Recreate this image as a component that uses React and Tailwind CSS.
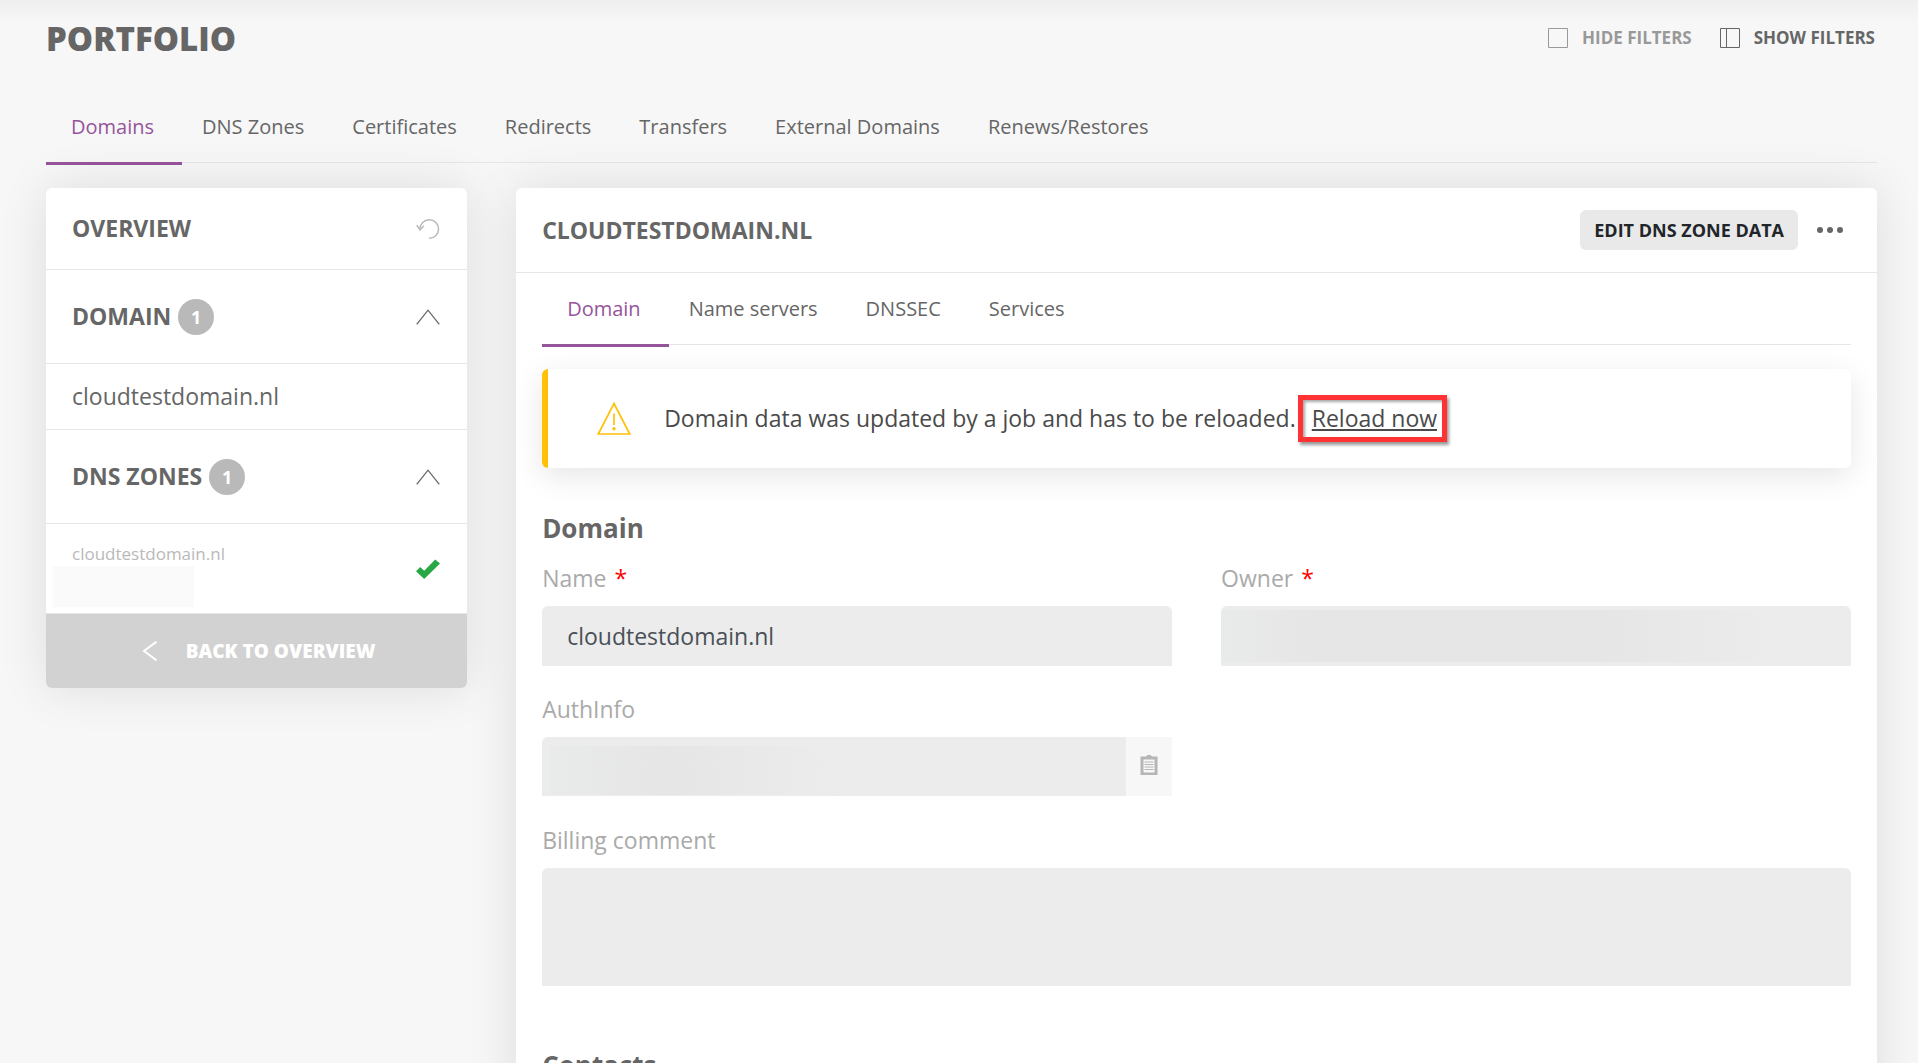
import React, { useState } from 'react';

const portfolioTabs = ['Domains', 'DNS Zones', 'Certificates', 'Redirects', 'Transfers', 'External Domains', 'Renews/Restores'];
const domainTabs = ['Domain', 'Name servers', 'DNSSEC', 'Services'];

const Tabs = ({ items, active, onChange }) => (
  <nav className="flex border-b border-[#e6e6e6]">
    {items.map((item) => (
      <button
        key={item}
        type="button"
        onClick={() => onChange(item)}
        className={`-mb-[3px] h-[74px] border-b-[3px] pr-7 pl-5 text-xl whitespace-nowrap first:pl-[25px] ${item === active ? 'border-[#96549c] text-[#96549c]' : 'border-transparent text-[#666]'}`}
      >
        {item}
      </button>
    ))}
  </nav>
);

const Chevron = () => (
  <svg width="24" height="16" viewBox="0 0 24 16" fill="none" stroke="#666" strokeWidth="1.3">
    <path d="M0.7 15.3 12 1.2 23.3 15.3" />
  </svg>
);

const SidebarGroup = ({ title, count }) => {
  return (
    <button type="button" className="flex h-[94px] w-full items-center justify-between border-b border-[#e6e6e6] pr-[27px] pl-[26px] text-left">
      <span className="flex items-center gap-[7px] text-[23px] font-bold">
        {title}
        <span className="flex size-9 items-center justify-center rounded-full bg-[#b9b9b9] text-lg text-white">{count}</span>
      </span>
      <Chevron />
    </button>
  );
};

const Label = ({ htmlFor, required, children }) => (
  <label htmlFor={htmlFor} className="flex h-11 gap-2 text-[23px] leading-8 text-[#aaa]">
    {children}
    {required && <span className="text-[#f00]">*</span>}
  </label>
);

const Sidebar = () => (
  <aside className="w-[23%] shrink-0 overflow-hidden rounded-md bg-white shadow-[0_0_50px_rgba(0,0,0,0.11)]">
    <div className="flex h-[82px] items-center justify-between border-b border-[#e6e6e6] pr-[27px] pl-[26px]">
      <h2 className="text-[23px] font-bold">OVERVIEW</h2>
      <button type="button" aria-label="Refresh">
        <svg width="24" height="22" viewBox="0 0 24 22" fill="none" stroke="#bbb" strokeWidth="1.5">
          <path d="M4 11.5A9.3 9.3 0 1 1 13 20.3" />
          <path d="M0.7 7.3 4 11.8 8 7.8" />
        </svg>
      </button>
    </div>
    <SidebarGroup title="DOMAIN" count={1} />
    <a href="#domain" className="flex h-[66px] items-center border-b border-[#e6e6e6] px-[26px] text-[23px]">cloudtestdomain.nl</a>
    <SidebarGroup title="DNS ZONES" count={1} />
    <a href="#zone" className="flex h-[90px] items-center justify-between border-b border-[#e6e6e6] pr-[27px] pl-[7px]">
      <span className="flex flex-col pt-3">
        <span className="pl-[19px] text-[17px] leading-6 text-[#b9b9b9]">cloudtestdomain.nl</span>
        <span className="h-[41px] w-[141px] bg-[#fafafa]" />
      </span>
      <svg width="24" height="20" viewBox="0 0 24 20" fill="#28a745">
        <path d="M0 12.2 4.2 8 8.2 11.8 19.2 0.5 24 4.6 8.2 20Z" />
      </svg>
    </a>
    <button type="button" className="flex h-[74px] w-full items-center justify-center gap-7 bg-[#d2d2d2] pl-1 text-[19px] font-extrabold text-white">
      <svg width="16" height="20" viewBox="0 0 16 20" fill="none" stroke="currentColor" strokeWidth="2">
        <path d="M14.5 0.7 2 10 14.5 19.3" />
      </svg>
      BACK TO OVERVIEW
    </button>
  </aside>
);

const ReloadAlert = () => (
  <div className="mt-6 flex h-[99px] items-center rounded-md border-l-[6px] border-[#ffc107] bg-white pl-[49px] text-[23px] text-[#4a4a4a] shadow-[0_8px_30px_rgba(0,0,0,0.1)]">
    <svg width="34" height="33" viewBox="0 0 34 33" fill="none" stroke="#ffc107" strokeWidth="1.7">
      <path d="M17 1.5 32.8 32H1.2Z" />
      <path d="M17 11.5V23" />
      <circle cx="17" cy="26.7" r="1.7" fill="#ffc107" stroke="none" />
    </svg>
    <p className="ml-[33px] whitespace-nowrap">Domain data was updated by a job and has to be reloaded.</p>
    <span className="ml-0.5 flex h-[47px] items-center border-[5px] border-[#f33] pr-[5px] pl-[9px] shadow-[2px_3px_3px_rgba(0,0,0,0.4),inset_2px_2px_3px_rgba(0,0,0,0.35)]">
      <a href="#reload" className="whitespace-nowrap underline decoration-2 underline-offset-2">Reload now</a>
    </span>
  </div>
);

const inputClass = 'h-[60px] w-full rounded-t-md bg-[#ececec] px-[25px] text-[23px] text-[#495057] outline-none';

const DomainForm = () => (
  <form>
    <h3 className="mt-[42px] h-[52px] text-[26px] leading-9 font-bold">Domain</h3>
    <div className="grid grid-cols-2 gap-x-[49px] gap-y-[27px]">
      <div>
        <Label htmlFor="name" required>Name</Label>
        <input id="name" type="text" readOnly value="cloudtestdomain.nl" className={inputClass} />
      </div>
      <div>
        <Label htmlFor="owner" required>Owner</Label>
        <input id="owner" type="text" readOnly className={`${inputClass} bg-[linear-gradient(to_right,#e9eaea,#e6e6e6_15%,#e6e6e6_60%,#ececec_90%)] bg-[length:100%_52px] bg-center bg-no-repeat`} />
      </div>
      <div>
        <Label htmlFor="authinfo">AuthInfo</Label>
        <div className="flex">
          <input id="authinfo" type="text" readOnly className="h-[59px] min-w-0 flex-1 rounded-tl-md bg-[#ececec] bg-[linear-gradient(to_right,#e9eaea,#e6e6e6_20%,#ececec_50%)] bg-[length:100%_49px] bg-position-[8px_9px] bg-no-repeat px-[25px] text-[23px] outline-none" />
          <button type="button" aria-label="Copy" className="flex w-[46px] items-center justify-center bg-[#f7f7f7] pb-[3px]">
            <svg width="18" height="20" viewBox="0 0 18 20">
              <path d="M0.5 1.5H6L7.5 0H10.5L12 1.5H17.5V20H0.5Z" fill="#b5b5b5" />
              <path d="M3.5 4.5H14.5V17.5H3.5Z" fill="#f7f7f7" />
              <path d="M4.5 7H13.5M4.5 9.5H13.5M4.5 12H13.5M4.5 14.5H13.5" stroke="#b5b5b5" />
            </svg>
          </button>
        </div>
      </div>
    </div>
    <div className="mt-7">
      <Label htmlFor="billing">Billing comment</Label>
      <textarea id="billing" className="block h-[118px] w-full resize-none rounded-t-md bg-[#ececec] p-6 text-[23px] outline-none" />
    </div>
    <h3 className="mt-[61px] text-[26px] leading-9 font-bold">Contacts</h3>
  </form>
);

const App = () => {
  const [tab, setTab] = useState('Domains');
  const [domainTab, setDomainTab] = useState('Domain');

  return (
    <div className="h-screen overflow-hidden bg-[#f7f7f7] bg-[linear-gradient(#efefef,#f7f7f7_24px)] pr-[41px] pl-[46px] font-['Open_Sans',sans-serif] text-[#666]">
      <header className="flex h-[91px] items-start justify-between pt-[14px]">
        <h1 className="text-[33px] leading-[50px] font-extrabold">PORTFOLIO</h1>
        <div className="flex h-[48px] items-center gap-7 pr-0.5 text-[17px] font-bold">
          <button type="button" className="flex items-center gap-[14px] text-[#999]">
            <svg width="20" height="20" viewBox="0 0 20 20" fill="none" stroke="currentColor">
              <path d="M0.5 0.5H19.5V19.5H0.5Z" />
            </svg>
            HIDE FILTERS
          </button>
          <button type="button" className="flex items-center gap-[14px]">
            <svg width="20" height="20" viewBox="0 0 20 20" fill="none" stroke="currentColor">
              <path d="M0.5 0.5H19.5V19.5H0.5ZM6.5 0.5V19.5" />
            </svg>
            SHOW FILTERS
          </button>
        </div>
      </header>
      <Tabs items={portfolioTabs} active={tab} onChange={setTab} />
      <div className="mt-[25px] flex items-start gap-[49px]">
        <Sidebar />
        <main className="min-w-0 flex-1 rounded-md bg-white pb-10 shadow-[0_0_50px_rgba(0,0,0,0.11)]">
          <div className="flex h-[85px] items-center justify-between border-b border-[#e6e6e6] pr-[34px] pl-[26px]">
            <h2 className="text-[23px] font-bold">CLOUDTESTDOMAIN.NL</h2>
            <div className="flex items-center gap-[19px]">
              <button type="button" className="h-10 rounded-md bg-[#e9e9e9] px-[14px] text-lg font-bold text-[#212529]">EDIT DNS ZONE DATA</button>
              <button type="button" aria-label="More">
                <svg width="26" height="6" viewBox="0 0 26 6" fill="#666">
                  <circle cx="3" cy="3" r="3" />
                  <circle cx="13" cy="3" r="3" />
                  <circle cx="23" cy="3" r="3" />
                </svg>
              </button>
            </div>
          </div>
          <div className="px-[26px]">
            <Tabs items={domainTabs} active={domainTab} onChange={setDomainTab} />
            <ReloadAlert />
            <DomainForm />
          </div>
        </main>
      </div>
    </div>
  );
};

export default App;
